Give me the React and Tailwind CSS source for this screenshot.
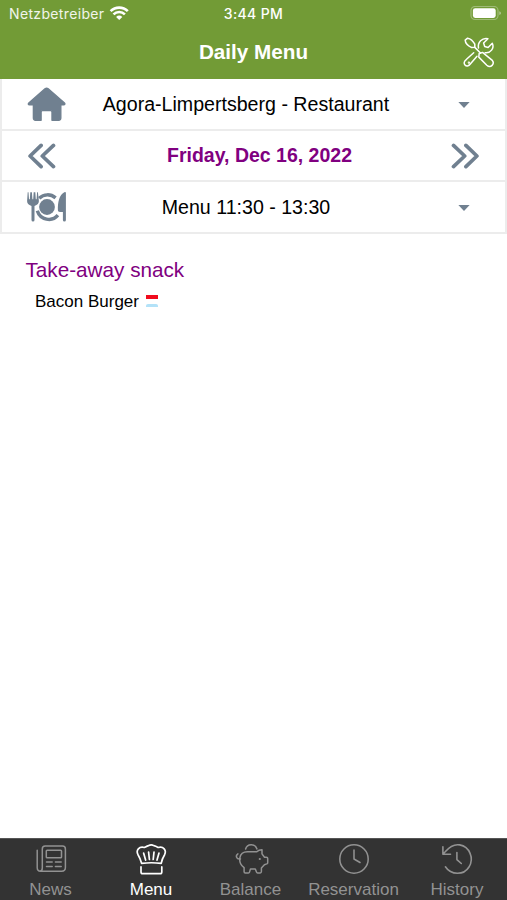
import React from 'react';

function WifiIcon() {
  return (
    <svg className="ml-[5px] block" width="20" height="16" viewBox="109 5 20 16" fill="none" stroke="#fff" strokeWidth="2.6">
      <path d="M110.6 11.2c4.8-4.8 12.4-4.8 17.2 0" />
      <path d="M113.5 14.4c3.2-3.1 8.2-3.1 11.4 0" />
      <path d="M116.1 17a4.5 4.5 0 0 1 6.2 0l-3.1 3.1z" fill="#fff" stroke="none" />
    </svg>
  );
}

function BatteryIcon() {
  return (
    <svg className="block" width="32" height="16" viewBox="470 6 32 16">
      <rect x="471" y="6.5" width="27" height="13" rx="4" fill="none" stroke="#fff" strokeOpacity=".32" strokeWidth="1.2" />
      <rect x="472.9" y="8.3" width="22.8" height="9.6" rx="2.3" fill="#fff" />
      <path d="M499.4 11.2c2 .6 2 3.2 0 3.8z" fill="#fff" fillOpacity=".5" />
    </svg>
  );
}

function ToolsIcon() {
  return (
    <svg className="block" width="34" height="34" viewBox="462 35 34 34" fill="none" stroke="#fff" strokeWidth="1.5" strokeLinejoin="round" strokeLinecap="round">
      <path d="M465.2 40.2 467.6 38.2C470.5 38.7 473 40.8 474.8 44.2L474.8 47.2 471.7 47.6C467.8 45.7 465.3 43.4 465.2 40.2z" />
      <path d="M474.8 47.4 480.7 53.3" />
      <path d="M479.2 53.4 482.5 52.4 492 60.1C495.4 64 490.6 68.5 486.8 65.2L478.8 57.1z" />
      <path d="M477 56.3 470.5 63.8C466.7 69.2 460.9 63.1 466.5 59.3L473.7 52.7" />
      <path d="M478.5 48C477.4 42.4 482 37.5 487.9 38.7L483.6 43.1 484.7 46.5 488.1 47.5 492.3 43.3C494.6 48.2 490.5 53.5 485.1 52.7" />
      <circle cx="468.9" cy="62.6" r=".45" fill="#fff" />
    </svg>
  );
}

function HouseIcon() {
  return (
    <svg className="block" width="40" height="36" viewBox="25.5 86 40 36" fill="#708090" stroke="#708090" strokeWidth="1.4" strokeLinejoin="round">
      <path d="M44.5 88.7q1.6-1.2 3.2 0L64 103c.8.8.3 1.9-.8 1.9h-2.9v13.2q0 2.1-2.1 2.1h-6.7V112q0-1.4-1.4-1.4H42q-1.4 0-1.4 1.4v8.2H35q-2.1 0-2.1-2.1v-13.2h-4c-1.1 0-1.5-1.1-.6-1.9z" />
    </svg>
  );
}

function DoubleChevron({ direction }) {
  return (
    <svg className={direction === 'right' ? 'mt-[1px] block rotate-180' : 'mt-[1px] block'} width="30" height="28" viewBox="26.3 142 30 28" fill="none" stroke="#708090" strokeWidth="3.7" strokeLinecap="round" strokeLinejoin="round">
      <path d="M41.4 145.4 30.4 156l11 10.6M53.8 145.4 42.6 156l11.2 10.6" />
    </svg>
  );
}

function CutleryIcon() {
  return (
    <svg className="block" width="42" height="32" viewBox="26 191 42 32" fill="#708090">
      <path d="M27.7 192.3h.8l.5 7h.8l.5-7h1.6l.5 7h.8l.5-7h1.6l.5 7h.8l.5-7h.8l1 8.8q.1 3.4-4.4 4.8v14.2q0 1.5-1.5 1.5t-1.5-1.5v-14.2q-4.6-1.4-4.4-4.8z" />
      <circle cx="47" cy="207" r="7.9" />
      <g fill="none" stroke="#708090" strokeWidth="3.4">
        <path d="M39.2 198.2c4.7-4.5 11.6-4.4 16.4-.3" />
        <path d="M37.3 210.7c2.9 9.2 14.7 11.7 20.6 4.5" />
      </g>
      <path d="M65.9 193q0-1.5-1.6-.8c-5 2.5-6.7 10.3-6.4 18 .1 1.2.8 1.7 2 1.7h3v8q0 1.7 1.5 1.7t1.5-1.7z" />
    </svg>
  );
}

function CaretIcon() {
  return (
    <svg className="mt-[2px] block" width="14" height="8" viewBox="0 0 14 8" fill="#708090">
      <path d="M1.4 1h11.2L7 6.9z" />
    </svg>
  );
}

function NewsIcon() {
  return (
    <svg width="34" height="32" viewBox="34 843 34 32" fill="none" stroke="currentColor" strokeWidth="1.5" strokeLinecap="round" strokeLinejoin="round">
      <path d="M37.2 850.2v17.3q0 3.7 3.2 3.7h21.2q3.8 0 3.8-3.7V849q0-2.9-2.9-2.9H45.2q-2.9 0-2.9 2.9v19q0 3.2-2.5 3.2" />
      <rect x="46.3" y="850.3" width="15.2" height="7.5" rx=".8" />
      <path d="M46.5 861.9h5.7m3.2 0h5.8m-14.7 4.7h5.7m3.2 0h5.8" />
    </svg>
  );
}

function ChefIcon() {
  return (
    <svg width="34" height="32" viewBox="134 842.5 34 32" fill="none" stroke="currentColor" strokeWidth="1.7" strokeLinecap="round" strokeLinejoin="round">
      <path d="M141.6 862.8C140.6 858.8 139.6 856.8 138 854.2C135.6 849.6 139.2 845.6 144.4 847C146.4 845.9 147 845.4 148.6 845.1C150 844.2 152.4 844.2 153.8 845.1C155.6 845.4 156.4 845.9 158.2 847C163.4 845.6 166.8 849.6 164.6 854.2C163 856.8 162 858.8 161.2 862.8C155 862.1 147.8 862.1 141.6 862.8z" />
      <path d="M143.6 852.6l2 7M148.6 851.6l.8 7.4M154 851.6l-.8 7.4M159 852.6l-2 7" />
      <path d="M141 866.4v5q0 1.7 1.7 1.7h17.4q1.7 0 1.7-1.7v-5" />
    </svg>
  );
}

function PiggyIcon() {
  return (
    <svg width="38" height="34" viewBox="230.6 842 38 34" fill="none" stroke="currentColor" strokeWidth="1.5" strokeLinecap="round" strokeLinejoin="round">
      <path d="M244.2 849c1.6-5.4 9.4-5.6 11.4-.1" />
      <path d="M246 851.7h9.4c1.3-1.4 2.9-2 5.2-2v4.2l2.5 3.4h2q1.2 0 1.2 1.2v4.2q0 .8-1 1.2l-2.3.8-3 3.3v3.6q0 1.3-1.2 1.3h-2.6q-.8 0-1.1-.8l-1.2-3.2h-4.8l-1 3.2q-.2.8-1.1.8h-3.1q-1.2 0-1.2-1.2v-4c-6.8-5-5.6-16 3.3-16z" />
      <path d="M239.1 859c-4.4.8-5.2-3.6-2.6-5.2" />
      <circle cx="258.4" cy="859" r="1.1" fill="currentColor" stroke="none" />
    </svg>
  );
}

function ClockIcon() {
  return (
    <svg width="34" height="34" viewBox="337 842 34 34" fill="none" stroke="currentColor" strokeWidth="1.55" strokeLinecap="round" strokeLinejoin="round">
      <circle cx="354" cy="859" r="14.2" />
      <path d="M354 850.1v8.9l6 3.5" />
    </svg>
  );
}

function HistoryIcon() {
  return (
    <svg width="34" height="34" viewBox="440 841.5 34 34" fill="none" stroke="currentColor" strokeWidth="1.6" strokeLinecap="round" strokeLinejoin="round">
      <path d="M445.4 866.3c5.7 8.6 18.3 8.7 23.6.2 5.4-8.8.6-20.3-9.3-22.1-5.6-1-9.8 1.4-14.5 6.9l-2.3 2.4v-7.5m0 7.5h7.6M456.9 852v7.1l4.4 3.9" />
    </svg>
  );
}

const rows = [
  { icon: <HouseIcon />, text: 'Agora-Limpertsberg - Restaurant', label: 'text-[19.6px] text-black', right: <CaretIcon />, pad: 'pt-[1px]' },
  { icon: <DoubleChevron direction="left" />, text: 'Friday, Dec 16, 2022', label: 'pt-[1px] text-[19.5px] font-bold text-[#800080]', right: <DoubleChevron direction="right" />, pad: '' },
  { icon: <CutleryIcon />, text: 'Menu 11:30 - 13:30', label: 'pt-[1px] text-[19.6px] text-black', right: <CaretIcon />, pad: '' },
];

const tabs = [
  { label: 'News', icon: <NewsIcon />, style: 'w-[101px] text-[#929292]' },
  { label: 'Menu', icon: <ChefIcon />, style: 'w-[100px] text-white' },
  { label: 'Balance', icon: <PiggyIcon />, style: 'w-[99px] text-[#929292]' },
  { label: 'Reservation', icon: <ClockIcon />, style: 'w-[107px] text-[#929292]' },
  { label: 'History', icon: <HistoryIcon />, style: 'w-[100px] text-[#929292]' },
];

export default function App() {
  return (
    <div className="flex h-[900px] w-[507px] flex-col overflow-hidden bg-white font-['Liberation_Sans',Arial,sans-serif]">
      <header className="h-[79px] shrink-0 bg-[#729b36] text-white">
        <div className="grid h-[26px] grid-cols-[1fr_auto_1fr] items-center font-['Inter',sans-serif] text-[14px]">
          <div className="flex items-center pl-[9px]">
            <span className="tracking-[0.35px] text-white/90">Netzbetreiber</span>
            <WifiIcon />
          </div>
          <span className="font-medium tracking-[0.35px]">3:44 PM</span>
          <div className="flex justify-end pr-[5px] pt-[1px]"><BatteryIcon /></div>
        </div>
        <div className="grid h-[52px] grid-cols-[1fr_auto_1fr] items-center">
          <span />
          <h1 className="text-[20.7px] font-bold">Daily Menu</h1>
          <div className="flex justify-end pr-[11px]"><ToolsIcon /></div>
        </div>
      </header>

      <section className="flex shrink-0 flex-col border-x-2 border-[#ececec]">
        {rows.map((row) => (
          <div key={row.text} className={`grid h-[51.6px] grid-cols-[95px_1fr_95px] items-center border-b-2 border-[#ececec] ${row.pad}`}>
            <div className="flex pl-[24px]">{row.icon}</div>
            <span className={`-mx-4 whitespace-nowrap text-center ${row.label}`}>
              <span className={row.right.type === CaretIcon ? 'mr-[15px]' : 'ml-[12px]'}>{row.text}</span>
            </span>
            <div className={row.right.type === CaretIcon ? 'flex justify-end pr-[34px]' : 'flex justify-end pr-[24px]'}>{row.right}</div>
          </div>
        ))}
      </section>

      <main className="flex-1 pt-[23px]">
        <h2 className="pl-[25.5px] text-[20.7px] leading-[26px] text-[#800080]">Take-away snack</h2>
        <div className="mt-[9px] flex items-center pl-[35px] text-[17px] leading-[20px] text-black">
          <span>Bacon Burger</span>
          <svg className="ml-[7px] -mt-[1px]" width="12" height="14" viewBox="0 0 12 14">
            <rect y="1" width="12" height="4" fill="#f10b1d" />
            <path d="M0 13v-1.5Q0 10 2 10h8q2 0 2 1.5V13z" fill="#b3e2f8" />
          </svg>
        </div>
      </main>

      <nav className="flex h-[62px] shrink-0 border-t border-[#555] bg-[#333]">
        {tabs.map((tab) => (
          <div key={tab.label} className={`flex shrink-0 flex-col items-center ${tab.style}`}>
            <div className="mt-[2px] flex h-[35px] items-center">{tab.icon}</div>
            <span className="mt-[4px] text-[17px] leading-[20px]">{tab.label}</span>
          </div>
        ))}
      </nav>
    </div>
  );
}
